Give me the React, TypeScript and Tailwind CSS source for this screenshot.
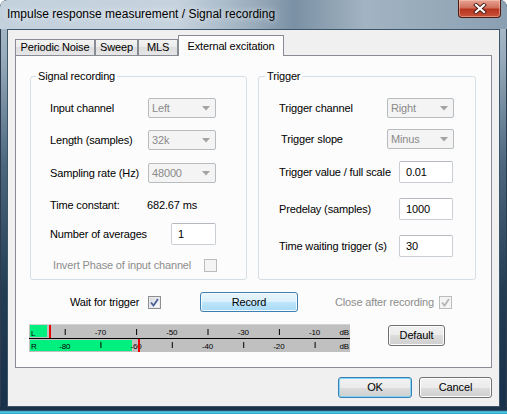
import type { ReactNode } from 'react'

const pos = (db: number) => (db + 90) * 3.57

function Combo({ value, w }: { value: string; w: string }) {
  return (
    <div className={`${w} h-[20px] flex items-center rounded-[2px] border border-[#b7bcc0] bg-[#f4f4f4] pl-[3px] text-[#8a8a8a]`}>
      <span>{value}</span>
      <svg className="ml-auto mr-[5px]" width="8" height="5" viewBox="0 0 8 5">
        <path d="M0 0 H8 L4 4.5 Z" fill="#a3a3a3" />
      </svg>
    </div>
  )
}

function TextBox({ value, w }: { value: string; w: string }) {
  return (
    <div className={`${w} h-[22px] flex items-center rounded-[2px] border border-[#c9ced4] border-t-[#b5bac1] bg-white pl-[6px] text-black`}>
      {value}
    </div>
  )
}

function Check({ checked, disabled }: { checked?: boolean; disabled?: boolean }) {
  return (
    <div
      className={`w-[13px] h-[13px] shrink-0 flex items-center justify-center border ${
        disabled
          ? 'border-[#bcbcbc] bg-[#f4f4f4]'
          : 'border-[#8e8f8f] bg-[linear-gradient(135deg,#cfd3d8_0%,#eef0f2_60%,#ffffff_100%)] shadow-[inset_0_0_0_1px_#e8eaec]'
      }`}
    >
      {checked && (
        <svg width="11" height="11" viewBox="0 0 11 11">
          <path d="M2 5.5 L4.5 8.5 L9 2" fill="none" stroke={disabled ? '#b3b3b3' : '#4a5f97'} strokeWidth="1.8" />
        </svg>
      )}
    </div>
  )
}

function Button({ children, w, kind = 'normal' }: { children: ReactNode; w: string; kind?: 'normal' | 'default' | 'hot' }) {
  const look =
    kind === 'hot'
      ? 'border-[#3c7fb1] bg-[linear-gradient(to_bottom,#eaf6fd_0%,#d9f0fc_50%,#bee6fd_50%,#a7d9f5_100%)] shadow-[inset_0_0_0_1px_#f4fbfe]'
      : kind === 'default'
        ? 'border-[#3c7fb1] bg-[linear-gradient(to_bottom,#f2f2f2_0%,#ebebeb_50%,#dddddd_50%,#cfcfcf_100%)] shadow-[inset_0_0_0_1px_#7fd6f7]'
        : 'border-[#707070] bg-[linear-gradient(to_bottom,#f2f2f2_0%,#ebebeb_50%,#dddddd_50%,#cfcfcf_100%)] shadow-[inset_0_0_0_1px_#fcfcfc]'
  return (
    <div className={`${w} h-full flex items-center justify-center rounded-[3px] border text-[11px] text-black ${look}`}>
      {children}
    </div>
  )
}

function Meter() {
  const lTicks = [-80, -60, -40, -20]
  const lLabels = [-70, -50, -30, -10]
  return (
    <svg width="321" height="28" viewBox="0 0 321 28" className="shrink-0" fontFamily="'Liberation Sans', Arial, sans-serif" fontSize="8">
      <rect x="0" y="0" width="321" height="28" fill="#c0c0c0" />
      <rect x="0" y="0" width="321" height="1" fill="#d4d4d4" />
      <rect x="0" y="14" width="321" height="1" fill="#000" />
      <rect x="1" y="1" width="17" height="12" fill="#00f080" />
      <rect x="1" y="16" width="102" height="11" fill="#00f080" />
      <text x="2" y="11.5">L</text>
      <text x="2" y="25">R</text>
      {lTicks.map((d) => (
        <rect key={'lt' + d} x={pos(d)} y="5" width="1" height="6" fill="#000" />
      ))}
      {lLabels.map((d) => (
        <text key={'ll' + d} x={pos(d)} y="11" textAnchor="middle">{d}</text>
      ))}
      {lLabels.map((d) => (
        <rect key={'rt' + d} x={pos(d)} y="18" width="1" height="6" fill="#000" />
      ))}
      {lTicks.map((d) => (
        <text key={'rl' + d} x={pos(d)} y="24.5" textAnchor="middle">{d}</text>
      ))}
      <text x="320" y="11" textAnchor="end">dB</text>
      <text x="320" y="24.5" textAnchor="end">dB</text>
      <rect x="20" y="1" width="2" height="13" fill="#ee0000" />
      <rect x="109" y="15" width="2" height="13" fill="#ee0000" />
    </svg>
  )
}

export default function App() {
  return (
    <div className="w-[507px] h-[414px] flex flex-col overflow-hidden rounded-t-[7px] bg-[linear-gradient(to_bottom,#b3c3d0_0%,#97abbc_14%,#4b667d_40%,#233d53_70%,#18304a_100%)] shadow-[inset_0_0_0_1px_#2a3c4d] font-['Liberation_Sans',Arial,sans-serif] text-[11px] tracking-[-0.15px] text-black">

      {/* title bar */}
      <div className="h-[29px] shrink-0 flex items-start rounded-t-[7px] bg-[linear-gradient(to_right,#c3d1dd_0%,#c6d3de_35%,#9aadbd_50%,#7a90a4_58%,#a2b4c2_72%,#8aa0b2_100%)]">
        <div className="pl-[7px] pt-[7px] text-[12px] leading-[14px] tracking-normal [text-shadow:0_0_6px_rgba(255,255,255,0.9)]">
          Impulse response measurement / Signal recording
        </div>
        <div className="ml-auto mr-[6px] w-[43px] h-[18px] flex items-center justify-center rounded-b-[4px] border border-t-0 border-[#4d1d16] bg-[linear-gradient(to_bottom,#e8a493_0%,#d0705d_45%,#b8341f_55%,#c8523a_100%)] shadow-[inset_0_0_0_1px_rgba(255,210,200,0.45)]">
          <svg width="14" height="11" viewBox="0 0 14 11">
            <path d="M3 2 L11 9 M11 2 L3 9" stroke="#4a1c16" strokeWidth="4" strokeLinecap="square" />
            <path d="M3 2 L11 9 M11 2 L3 9" stroke="#ffffff" strokeWidth="2.2" strokeLinecap="square" />
          </svg>
        </div>
      </div>

      {/* client */}
      <div className="mx-[7px] h-[378px] shrink-0 flex flex-col border border-[#3e5468] bg-[#f0f0f0]">

        {/* tabs */}
        <div className="relative z-10 mt-[5px] ml-[7px] h-[21px] -mb-px flex items-end">
          <div className="w-[80px] h-[16px] mb-px flex items-center justify-center border border-b-0 border-[#898c95] bg-[linear-gradient(to_bottom,#f3f3f3_0%,#ebebeb_50%,#dedede_50%,#e6e6e6_100%)]">Periodic Noise</div>
          <div className="w-[43px] h-[16px] mb-px flex items-center justify-center border border-b-0 border-[#898c95] bg-[linear-gradient(to_bottom,#f3f3f3_0%,#ebebeb_50%,#dedede_50%,#e6e6e6_100%)]">Sweep</div>
          <div className="w-[40px] h-[16px] mb-px flex items-center justify-center border border-b-0 border-[#898c95] bg-[linear-gradient(to_bottom,#f3f3f3_0%,#ebebeb_50%,#dedede_50%,#e6e6e6_100%)]">MLS</div>
          <div className="w-[106px] h-[21px] flex items-center justify-center border border-b-0 border-[#898c95] bg-[#fcfcfc]">External excitation</div>
        </div>

        {/* tab page */}
        <div className="ml-[7px] w-[477px] h-[313px] shrink-0 flex flex-col border border-[#898c95] bg-[#fcfcfc]">
          <div className="mt-[20px] ml-[14px] flex">

            {/* signal recording group */}
            <div className="w-[217px] h-[204px] flex flex-col rounded-[3px] border border-[#d5dfe5]">
              <div className="-mt-[8px] ml-[5px] px-[2px] w-fit h-[14px] leading-[14px] bg-[#fcfcfc]">Signal recording</div>
              <div className="mt-[15px] h-[20px] flex items-center">
                <span className="ml-[19px] w-[98px]">Input channel</span>
                <Combo value="Left" w="w-[68px]" />
              </div>
              <div className="mt-[12px] h-[20px] flex items-center">
                <span className="ml-[19px] w-[98px]">Length (samples)</span>
                <Combo value="32k" w="w-[68px]" />
              </div>
              <div className="mt-[13px] h-[20px] flex items-center">
                <span className="ml-[19px] w-[98px]">Sampling rate (Hz)</span>
                <Combo value="48000" w="w-[68px]" />
              </div>
              <div className="mt-[12px] h-[20px] flex items-center">
                <span className="ml-[19px] w-[97px]">Time constant:</span>
                <span>682.67 ms</span>
              </div>
              <div className="mt-[8px] h-[22px] flex items-center">
                <span className="ml-[19px] w-[121px]">Number of averages</span>
                <TextBox value="1" w="w-[45px]" />
              </div>
              <div className="mt-[10px] h-[20px] flex items-center">
                <span className="ml-[22px] w-[151px] text-[#8d8d8d]">Invert Phase of input channel</span>
                <Check disabled />
              </div>
            </div>

            {/* trigger group */}
            <div className="ml-[11px] w-[218px] h-[204px] flex flex-col rounded-[3px] border border-[#d5dfe5]">
              <div className="-mt-[8px] ml-[6px] px-[2px] w-fit h-[14px] leading-[14px] bg-[#fcfcfc]">Trigger</div>
              <div className="mt-[15px] h-[20px] flex items-center">
                <span className="ml-[20px] w-[108px]">Trigger channel</span>
                <Combo value="Right" w="w-[67px]" />
              </div>
              <div className="mt-[11px] h-[20px] flex items-center">
                <span className="ml-[22px] w-[106px]">Trigger slope</span>
                <Combo value="Minus" w="w-[67px]" />
              </div>
              <div className="mt-[12px] h-[22px] flex items-center">
                <span className="ml-[20px] w-[120px]">Trigger value / full scale</span>
                <TextBox value="0.01" w="w-[54px]" />
              </div>
              <div className="mt-[15px] h-[22px] flex items-center">
                <span className="ml-[20px] w-[120px]">Predelay (samples)</span>
                <TextBox value="1000" w="w-[54px]" />
              </div>
              <div className="mt-[15px] h-[22px] flex items-center">
                <span className="ml-[20px] w-[120px]">Time waiting trigger (s)</span>
                <TextBox value="30" w="w-[54px]" />
              </div>
            </div>
          </div>

          {/* record row */}
          <div className="mt-[12px] h-[20px] flex items-center">
            <span className="ml-[54px] w-[78px]">Wait for trigger</span>
            <Check checked />
            <div className="ml-[39px] h-[20px]">
              <Button w="w-[98px]" kind="hot">Record</Button>
            </div>
            <span className="ml-[37px] w-[104px] text-[#8d8d8d]">Close after recording</span>
            <Check checked disabled />
          </div>

          {/* level meter + default */}
          <div className="mt-[12px] flex items-start">
            <div className="ml-[13px]">
              <Meter />
            </div>
            <div className="ml-[38px] mt-[1px] h-[21px]">
              <Button w="w-[57px]">Default</Button>
            </div>
          </div>
        </div>

        {/* dialog buttons */}
        <div className="mt-[9px] mr-[7px] h-[21px] flex justify-end gap-[7px]">
          <Button w="w-[74px]" kind="default">OK</Button>
          <Button w="w-[73px]">Cancel</Button>
        </div>
      </div>

      {/* bottom frame */}
      <div className="h-[7px] shrink-0 bg-[linear-gradient(to_bottom,#1b3249_0%,#1b3249_45%,#56d3f2_70%,#2c9cc4_100%)]" />
    </div>
  )
}
